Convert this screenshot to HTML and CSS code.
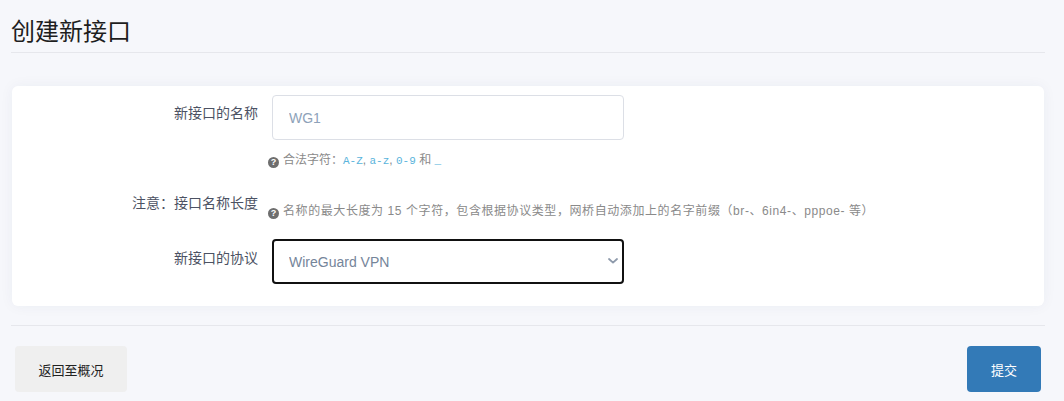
FILE: index.html
```html
<!DOCTYPE html>
<html lang="zh-CN">
<head>
<meta charset="utf-8">
<title>创建新接口</title>
<link rel="stylesheet" href="styles.css">
</head>
<body>
<div class="page">
  <h2 class="title">创建新接口</h2>

  <div class="card">
    <div class="row row-name">
      <label class="label" for="name">新接口的名称</label>
      <div class="field">
        <input id="name" class="input" type="text" placeholder="WG1">
        <div class="help help-under"><span class="qicon">?</span>合法字符：<code>A-Z</code>, <code>a-z</code>, <code>0-9</code> 和 <code>_</code></div>
      </div>
    </div>

    <div class="row row-note">
      <div class="label">注意：接口名称长度</div>
      <div class="field">
        <div class="help help-note"><span class="qicon">?</span>名称的最大长度为 15 个字符，包含根据协议类型，网桥自动添加上的名字前缀（br-、6in4-、pppoe- 等）</div>
      </div>
    </div>

    <div class="row row-proto">
      <label class="label label-proto" for="proto">新接口的协议</label>
      <div class="field">
        <div class="select-wrap">
          <select id="proto" class="select">
            <option>WireGuard VPN</option>
          </select>
          <svg class="chevron" width="10" height="6" viewBox="0 0 10 6"><path d="M1 1 L5 4.6 L9 1" fill="none" stroke="#8e9aab" stroke-width="1.8" stroke-linecap="round" stroke-linejoin="round"/></svg>
        </div>
      </div>
    </div>
  </div>

  <div class="footer">
    <button class="btn btn-back" type="button">返回至概况</button>
    <button class="btn btn-submit" type="button">提交</button>
  </div>
</div>
</body>
</html>
```

FILE: styles.css
```css
html, body {
  margin: 0;
  padding: 0;
}

body {
  background: #f6f7fb;
  font-family: "Noto Sans CJK SC", "Liberation Sans", sans-serif;
  color: #222;
  height: 401px;
  overflow: hidden;
}

.page {
  padding: 0 19px 0 11px;
}

.title {
  margin: 0;
  padding: 12px 0 4px;
  font-size: 24px;
  line-height: 36px;
  font-weight: 400;
  color: #1e1e1e;
  border-bottom: 1px solid #e6e7ec;
}

.card {
  margin: 33px 1px 0;
  background: #fff;
  border-radius: 6px;
  box-shadow: 0 0 14px rgba(40, 50, 90, 0.05);
  padding: 9px 0 22px;
}

.row {
  display: grid;
  grid-template-columns: 246px 1fr;
  column-gap: 14px;
}

.row-name { margin-bottom: 16px; }
.row-note { margin-bottom: 19px; }

.label {
  text-align: right;
  font-size: 14px;
  line-height: 20px;
  height: 20px;
  padding-top: 7px;
  color: #4c5263;
}

.label-proto { padding-top: 8px; }

.input {
  display: block;
  box-sizing: border-box;
  width: 352px;
  height: 45px;
  border: 1px solid #dcdfe6;
  border-radius: 4px;
  padding: 0 16px;
  font-family: "Liberation Sans", "Noto Sans CJK SC", sans-serif;
  font-size: 14px;
  color: #333;
  background: #fff;
  outline: none;
}

.input::placeholder {
  color: #8ea2b9;
}

.help {
  margin-left: -4px;
  font-family: "Liberation Sans", "Noto Sans CJK SC", sans-serif;
  font-size: 12px;
  line-height: 18px;
  height: 18px;
  color: #8a8a8a;
  white-space: nowrap;
}

.help-under { margin-top: 11px; }
.help-note {
  padding-top: 17px;
  letter-spacing: 0.58px;
}

.qicon {
  display: inline-block;
  width: 11px;
  height: 11px;
  border-radius: 50%;
  background: #6e6e6e;
  color: #fff;
  font-family: "Liberation Sans", sans-serif;
  font-size: 9px;
  font-weight: 700;
  line-height: 11px;
  text-align: center;
  letter-spacing: 0;
  margin-right: 4px;
  vertical-align: -1px;
}

code {
  font-family: "Liberation Mono", monospace;
  font-size: 11px;
  line-height: 1;
  color: #5ab4dc;
}

.select-wrap {
  position: relative;
  width: 352px;
}

.select {
  display: block;
  box-sizing: border-box;
  width: 352px;
  height: 45px;
  border: 2px solid #111;
  border-radius: 4px;
  padding: 0 15px;
  font-family: "Liberation Sans", "Noto Sans CJK SC", sans-serif;
  font-size: 14px;
  color: #75859a;
  background: #fff;
  appearance: none;
  -webkit-appearance: none;
  outline: none;
}

.chevron {
  position: absolute;
  right: 6px;
  top: 19px;
  pointer-events: none;
}

.footer {
  margin-top: 19px;
  border-top: 1px solid #e6e7ec;
  padding: 20px 4px 0;
  display: flex;
  justify-content: space-between;
}

.btn {
  height: 46px;
  border: none;
  border-radius: 4px;
  font-family: "Noto Sans CJK SC", sans-serif;
  font-size: 13px;
  padding: 0;
  white-space: nowrap;
  cursor: pointer;
}

.btn-back {
  background: #efefef;
  color: #222;
  width: 112px;
}

.btn-submit {
  background: #337ab7;
  color: #fff;
  width: 74px;
}
```
